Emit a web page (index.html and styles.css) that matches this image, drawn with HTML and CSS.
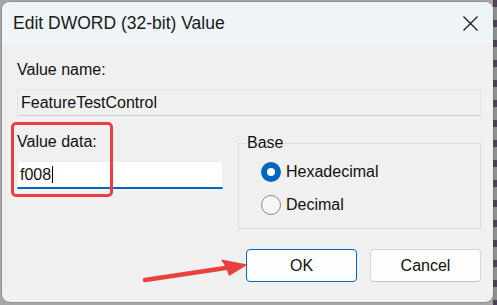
FILE: index.html
```html
<!DOCTYPE html>
<html>
    <head>
        <meta charset="utf-8">
        <title>Edit DWORD (32-bit) Value</title>
        <link rel="stylesheet" href="styles.css">
    </head>
    <body>
        <div class="window">
            <div class="titleBar">
                <span class="title">Edit DWORD (32-bit) Value</span>
                <svg class="closeIcon" width="15" height="15" viewBox="0 0 15 15">
                    <path d="M0.5 0.5 L14.5 14.5 M14.5 0.5 L0.5 14.5" stroke="#1b1b1b" stroke-width="1.3" fill="none"/>
                </svg>
            </div>
            <div class="content">
                <div class="label">Value name:</div>
                <div class="field nameField">FeatureTestControl</div>
                <div class="dataRow">
                    <div class="dataCol">
                        <div class="label">Value data:</div>
                        <div class="field dataField">f008<span class="caret"></span></div>
                    </div>
                    <fieldset class="baseGroup">
                        <legend>Base</legend>
                        <div class="radioList">
                            <div class="radioRow">
                                <span class="radio checked"></span>
                                <span>Hexadecimal</span>
                            </div>
                            <div class="radioRow">
                                <span class="radio"></span>
                                <span>Decimal</span>
                            </div>
                        </div>
                    </fieldset>
                </div>
                <div class="buttons">
                    <div class="btn btnDefault">OK</div>
                    <div class="btn">Cancel</div>
                </div>
                <div class="highlight"></div>
            </div>
        </div>
        <svg class="arrow" width="497" height="305" viewBox="0 0 497 305">
            <line x1="145" y1="280" x2="232" y2="267" stroke="#e8403f" stroke-width="4.5" stroke-linecap="round"/>
            <polygon points="248,264.5 221,259.5 226,267.5 229,276" fill="#e8403f"/>
        </svg>
    </body>
</html>
```

FILE: styles.css
```css
html, body {
    margin: 0;
    height: 100%;
}
body {
    background:
        repeating-linear-gradient(to bottom, #4e3f5c 0, #4e3f5c 7px, #8f8f8f 7px, #8f8f8f 20px) right top / 4px 100% no-repeat,
        #a7a7a7;
    padding: 2px 0 0 2px;
    box-sizing: border-box;
    font-family: "Liberation Sans", Arial, sans-serif;
    font-size: 16px;
    color: #111;
    overflow: hidden;
}
.window {
    width: 491px;
    height: 300px;
    background: #f0f0f0;
    border-radius: 8px;
    overflow: hidden;
    box-shadow: 0 0 0 1px rgba(0, 0, 0, 0.12);
    display: flex;
    flex-direction: column;
}
.titleBar {
    height: 42px;
    background: #eef4f7;
    display: flex;
    flex-direction: row;
    align-items: center;
    justify-content: space-between;
    padding: 0 15px 0 11px;
    flex-shrink: 0;
}
.title {
    font-size: 17.5px;
    line-height: 20px;
    color: #1a1a1a;
}
.content {
    position: relative;
    display: flex;
    flex-direction: column;
    padding: 17px 12px 0 15px;
}
.label {
    line-height: 18px;
}
.field {
    box-sizing: border-box;
    display: flex;
    align-items: center;
    line-height: 18px;
}
.nameField {
    margin-top: 10px;
    height: 27px;
    padding-left: 3px;
    border: 1px solid #e4e4e4;
    border-bottom-color: #cdcdcd;
}
.dataRow {
    display: flex;
    flex-direction: row;
    margin-top: 17px;
}
.dataCol {
    width: 206px;
    display: flex;
    flex-direction: column;
}
.dataField {
    margin-top: 10px;
    height: 28px;
    padding-left: 2px;
    background: #ffffff;
    border: 1px solid #ececec;
    border-bottom: 2px solid #0067c0;
}
.caret {
    display: inline-block;
    width: 1px;
    height: 17px;
    background: #000;
    margin-left: 1px;
}
.baseGroup {
    flex: 1;
    margin: 1px 0 0 15px;
    padding: 0 0 0 7px;
    height: 95px;
    box-sizing: border-box;
    border: 1px solid #dcdcdc;
    min-width: 0;
}
.baseGroup legend {
    padding: 0 1px;
    line-height: 18px;
}
.radioList {
    display: flex;
    flex-direction: column;
    gap: 13px;
    padding: 10px 0 0 15px;
}
.radioRow {
    display: flex;
    flex-direction: row;
    align-items: center;
    gap: 5px;
    line-height: 20px;
}
.radio {
    width: 20px;
    height: 20px;
    box-sizing: border-box;
    border-radius: 50%;
    border: 1px solid #8a8a8a;
    background: #f6f6f6;
}
.radio.checked {
    border: 6px solid #0067c0;
    background: #ffffff;
}
.buttons {
    display: flex;
    flex-direction: row;
    justify-content: flex-end;
    gap: 13px;
    margin-top: 20px;
}
.btn {
    width: 111px;
    height: 33px;
    box-sizing: border-box;
    display: flex;
    align-items: center;
    justify-content: center;
    background: #fdfdfd;
    border: 1px solid #d6d6d6;
    border-bottom-color: #c4c4c4;
    border-radius: 4px;
}
.btnDefault {
    border: 1px solid #0067c0;
}
.highlight {
    position: absolute;
    left: 9px;
    top: 78px;
    width: 102px;
    height: 75px;
    box-sizing: border-box;
    border: 3.5px solid #e8403f;
    border-radius: 5px;
}
.arrow {
    position: absolute;
    left: 0;
    top: 0;
}
```
